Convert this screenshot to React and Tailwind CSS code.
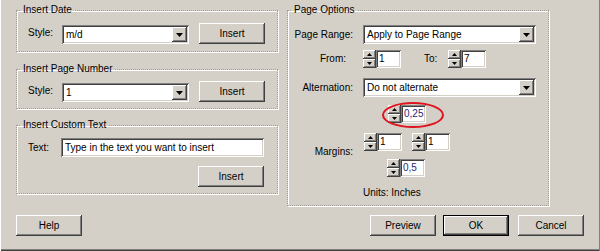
import React from 'react';

const raised =
  'shadow-[inset_-1px_-1px_0_#404040,inset_1px_1px_0_#fff,inset_-2px_-2px_0_#808080,inset_2px_2px_0_#d4d0c8]';
const sunken =
  'shadow-[inset_1px_1px_0_#808080,inset_-1px_-1px_0_#fff,inset_2px_2px_0_#404040,inset_-2px_-2px_0_#d4d0c8]';

const Button = ({ children, className = '', isDefault = false }) => (
  <div className={`h-[21px] w-[66px] flex items-center justify-center bg-[#d4d0c8] text-black ${className}`}>
    {isDefault ? (
      <div className="w-full h-full border border-black">
        <div className={`w-full h-full flex items-center justify-center ${raised}`}>{children}</div>
      </div>
    ) : (
      <div className={`w-full h-full flex items-center justify-center ${raised}`}>{children}</div>
    )}
  </div>
);

const Arrow = ({ up = false, small = false }) => (
  <svg width={small ? 5 : 7} height={small ? 3 : 4} viewBox={small ? '0 0 5 3' : '0 0 7 4'}>
    {small ? (
      <path d={up ? 'M2.5 0L5 3H0Z' : 'M0 0H5L2.5 3Z'} fill="#000" />
    ) : (
      <path d="M0 0H7L3.5 4Z" fill="#000" />
    )}
  </svg>
);

const Combo = ({ value, className = '' }) => (
  <div className={`h-[19px] bg-white flex items-center p-[2px] ${sunken} ${className}`}>
    <span className="flex-1 pl-[2px] truncate">{value}</span>
    <div className={`w-[15px] h-[15px] bg-[#d4d0c8] flex items-center justify-center ${raised}`}>
      <Arrow />
    </div>
  </div>
);

const Spinner = ({ value, className = '', tint = false }) => (
  <div className={`flex h-[18px] ${className}`}>
    <div className="w-[13px] flex flex-col">
      <div className={`h-[9px] bg-[#d4d0c8] flex items-center justify-center ${raised}`}>
        <Arrow up small />
      </div>
      <div className={`h-[9px] bg-[#d4d0c8] flex items-center justify-center ${raised}`}>
        <Arrow small />
      </div>
    </div>
    <div className={`w-[25px] h-[18px] bg-white flex items-center pl-[3px] ${sunken} ${tint ? 'text-[#2a1f78]' : ''}`}>
      {value}
    </div>
  </div>
);

// etched group frame
const Group = ({ title, className = '', children }) => (
  <fieldset className={`border border-dotted border-[#a29e96] shadow-[1px_1px_0_#fff,inset_1px_1px_0_#fff] ${className}`}>
    <legend className="ml-[4px] px-[2px] leading-[12px]">{title}</legend>
    {children}
  </fieldset>
);

export default function App() {
  return (
    <div
      className="w-[600px] h-[251px] bg-[#d4d0c8] text-[10px] leading-[12px] text-black shadow-[inset_1px_0_0_#fff,inset_-1px_0_0_#808080,inset_0_-1px_0_#404040,inset_0_-2px_0_#808080] overflow-hidden"
      style={{ fontFamily: '"Liberation Sans", Arial, sans-serif' }}
    >
      <div className="flex pt-[4px] pl-[16px]">
        {/* left column */}
        <div className="w-[262px] flex flex-col">
          <Group title="Insert Date" className="h-[48px]">
            <div className="flex items-start pt-[7px] pl-[11px]">
              <span className="w-[34px] mt-[4px]">Style:</span>
              <Combo value="m/d" className="w-[127px] mt-[2px]" />
              <Button className="ml-[10px] h-[20px]">Insert</Button>
            </div>
          </Group>
          <Group title="Insert Page Number" className="h-[46px] mt-[11px]">
            <div className="flex items-start pt-[6px] pl-[11px]">
              <span className="w-[34px] mt-[4px]">Style:</span>
              <Combo value="1" className="w-[127px] mt-[2px]" />
              <Button className="ml-[10px] h-[19px]">Insert</Button>
            </div>
          </Group>
          <Group title="Insert Custom Text" className="h-[75px] mt-[10px]">
            <div className="flex flex-col pt-[7px] pl-[11px]">
              <div className="flex items-center">
                <span className="w-[33px]">Text:</span>
                <div className={`w-[203px] h-[19px] bg-white flex items-center pl-[4px] ${sunken}`}>
                  Type in the text you want to insert
                </div>
              </div>
              <div className="flex justify-end w-[236px] mt-[9px]">
                <Button className="h-[20px]">Insert</Button>
              </div>
            </div>
          </Group>
        </div>

        {/* right column */}
        <Group title="Page Options" className="w-[262px] h-[202px] ml-[9px]">
          <div className="flex flex-col pt-[9px]">
            <div className="flex items-center">
              <span className="w-[65px] text-right">Page Range:</span>
              <Combo value="Apply to Page Range" className="w-[173px] ml-[10px]" />
            </div>
            <div className="flex items-center mt-[6px]">
              <span className="w-[58px] text-right">From:</span>
              <Spinner value="1" className="ml-[17px]" />
              <span className="ml-[23px] w-[24px]">To:</span>
              <Spinner value="7" />
            </div>
            <div className="flex items-center mt-[10px]">
              <span className="w-[65px] text-right">Alternation:</span>
              <Combo value="Do not alternate" className="w-[173px] ml-[10px]" />
            </div>
            <div className="flex mt-[8px]">
              <div className="w-[65px] flex items-end justify-end pb-[19px]">
                <span>Margins:</span>
              </div>
              <div className="flex flex-col ml-[11px]">
                <div className="relative ml-[24px] w-[38px]">
                  <Spinner value="0,25" tint />
                  <div className="absolute left-[-6px] top-[-3px] w-[62px] h-[26px] rounded-[50%] border-2 border-[#e0141e]" />
                </div>
                <div className="flex mt-[10px]">
                  <Spinner value="1" />
                  <Spinner value="1" className="ml-[10px]" />
                </div>
                <Spinner value="0,5" tint className="ml-[23px] mt-[8px]" />
              </div>
            </div>
            <div className="ml-[75px] mt-[10px]">Units: Inches</div>
          </div>
        </Group>
      </div>

      <div className="flex mt-[9px] pl-[16px]">
        <Button>Help</Button>
        <Button className="ml-[288px]">Preview</Button>
        <Button isDefault className="ml-[7px]">OK</Button>
        <Button className="ml-[9px]">Cancel</Button>
      </div>
    </div>
  );
}
